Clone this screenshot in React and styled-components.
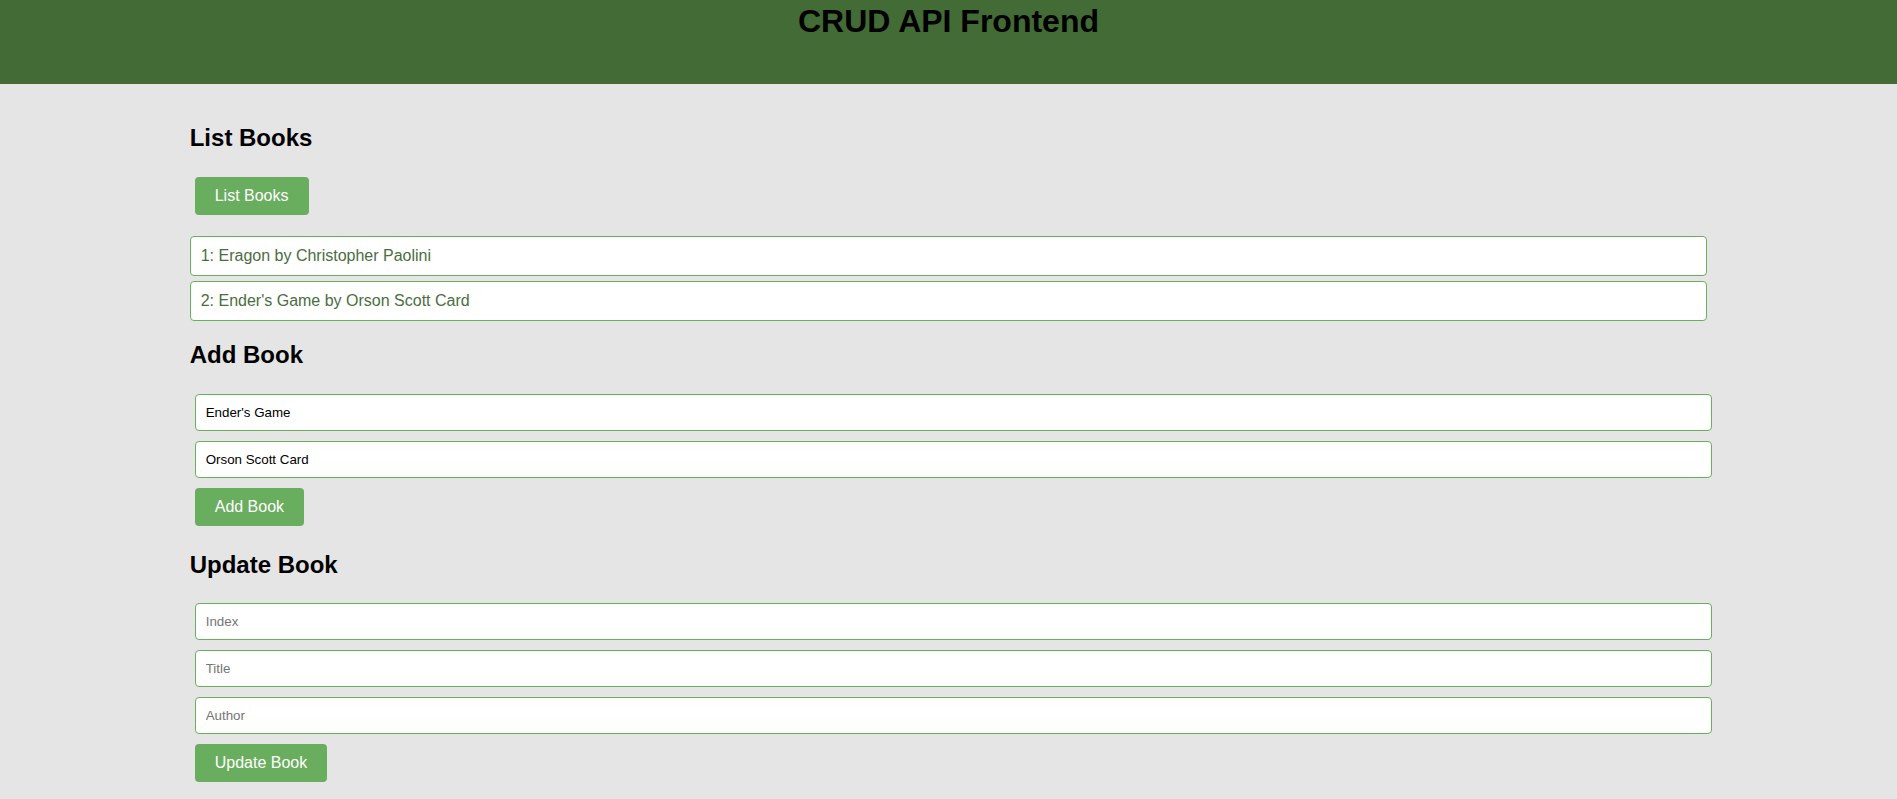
import React from "react";
import styled, { createGlobalStyle } from "styled-components";

const GlobalStyle = createGlobalStyle`
  *, *::before, *::after { box-sizing: border-box; }
  html, body { margin: 0; padding: 0; }
  body {
    background: #e5e5e5;
    font-family: "Liberation Sans", Arial, sans-serif;
    color: #000;
  }
`;

const Header = styled.header`
  background: #426b35;
  height: 84px;
  padding-top: 3px;
  text-align: center;
`;

const Title = styled.h1`
  margin: 0;
  font-size: 32px;
  font-weight: bold;
  color: #000;
`;

const Main = styled.main`
  width: 80%;
  margin: 0 auto;
  padding: 20px 0 0;
`;

const SectionTitle = styled.h2`
  font-size: 24px;
  font-weight: bold;
  margin: 19.92px 0;
`;

const ActionRow = styled.div``;

const Button = styled.button`
  display: inline-block;
  margin: 5px;
  padding: 10px 20px;
  background: #69ad5e;
  color: #fff;
  border: none;
  border-radius: 4px;
  font-family: "Liberation Sans", Arial, sans-serif;
  font-size: 16px;
  cursor: pointer;
  align-self: flex-start;
`;

const BookList = styled.ul`
  list-style: none;
  margin: 16px 0;
  padding: 0;
`;

const BookItem = styled.li`
  background: #fff;
  border: 1px solid #6ab05c;
  border-radius: 4px;
  padding: 10px;
  margin-bottom: 5px;
  font-size: 16px;
  color: #4a6e3e;
`;

const Form = styled.form`
  display: flex;
  flex-direction: column;
  align-items: flex-start;
`;

const Field = styled.input`
  width: 100%;
  margin: 5px;
  padding: 10px;
  border: 1px solid #6ab05c;
  border-radius: 4px;
  background: #fff;
  font-family: "Liberation Sans", Arial, sans-serif;
  font-size: 13.333px;
  color: #000;
  outline: none;
  &::placeholder { color: #757575; }
`;

const books = [
  { id: 1, title: "Eragon", author: "Christopher Paolini" },
  { id: 2, title: "Ender's Game", author: "Orson Scott Card" },
];

export default function App() {
  return (
    <>
      <GlobalStyle />
      <Header>
        <Title>CRUD API Frontend</Title>
      </Header>
      <Main>
        <SectionTitle>List Books</SectionTitle>
        <ActionRow>
          <Button type="button">List Books</Button>
        </ActionRow>
        <BookList>
          {books.map((b) => (
            <BookItem key={b.id}>
              {b.id}: {b.title} by {b.author}
            </BookItem>
          ))}
        </BookList>

        <SectionTitle>Add Book</SectionTitle>
        <Form onSubmit={(e) => e.preventDefault()}>
          <Field type="text" placeholder="Title" defaultValue="Ender's Game" />
          <Field type="text" placeholder="Author" defaultValue="Orson Scott Card" />
          <Button type="submit">Add Book</Button>
        </Form>

        <SectionTitle>Update Book</SectionTitle>
        <Form onSubmit={(e) => e.preventDefault()}>
          <Field type="text" placeholder="Index" />
          <Field type="text" placeholder="Title" />
          <Field type="text" placeholder="Author" />
          <Button type="submit">Update Book</Button>
        </Form>
      </Main>
    </>
  );
}
